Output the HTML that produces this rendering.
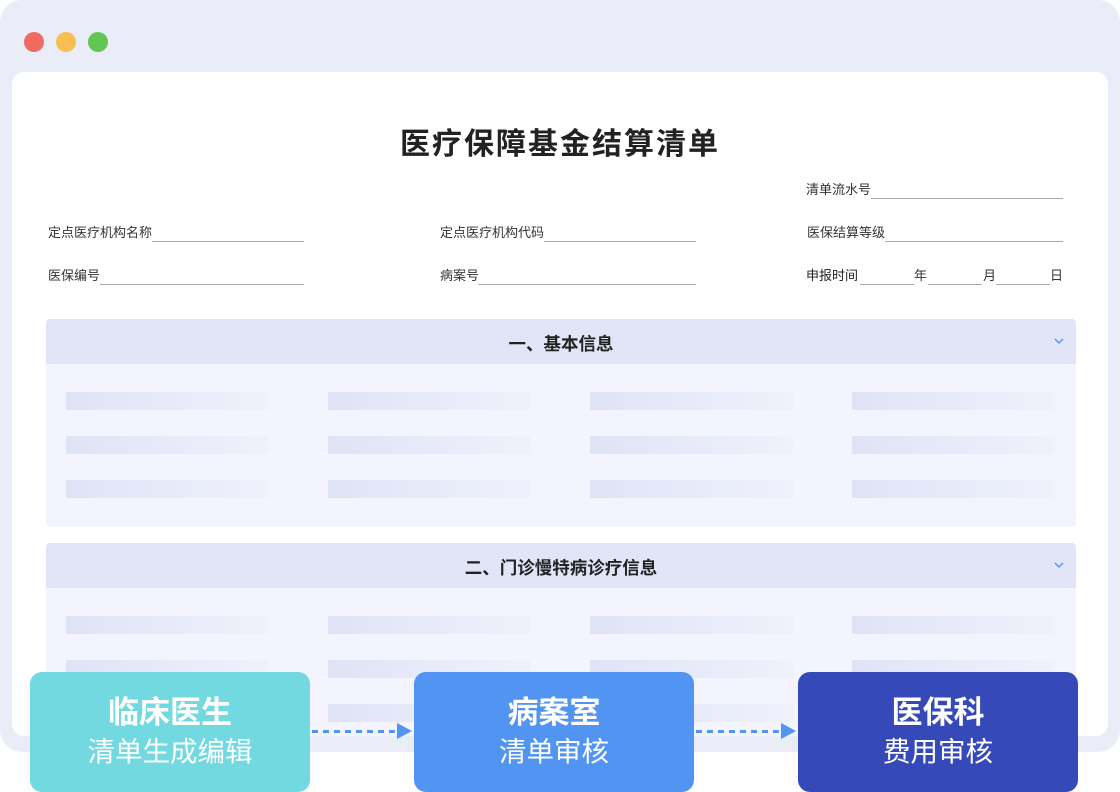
<!DOCTYPE html>
<html><head><meta charset="utf-8"><style>
*{margin:0;padding:0;box-sizing:border-box}
body{width:1120px;height:792px;position:relative;overflow:hidden;background:#fff;font-family:"Liberation Sans","Noto Sans CJK SC",sans-serif;color:#333}
.a{position:absolute}
.frame{left:0;top:0;width:1120px;height:752px;background:#eaedf8;border-radius:22px}
.dot{width:20px;height:20px;border-radius:50%;top:32px}
.panel{left:12px;top:72px;width:1096px;height:664px;background:#fff;border-radius:12px;overflow:hidden}
.lbl{font-size:13px;color:#333;line-height:16px;white-space:nowrap}
.ln{height:1px;background:#aaa}
.sec{left:46px;width:1030px;background:#f3f4fd;border-radius:4px;overflow:hidden}
.sh{height:45px;background:#e1e5f7;text-align:center;font-size:17.5px;font-weight:bold;line-height:50px;color:#222;position:relative}
.chev{position:absolute;right:12px;top:18px;width:10px;height:8px}
.bar{width:203px;height:18px;background:linear-gradient(90deg,#dfe3f6,#eff1fb)}
.btn{top:672px;width:280px;height:120px;border-radius:12px;color:#fff;text-align:center}
.btn .t{font-size:31px;font-weight:bold;margin-top:22px;line-height:38px}
.btn .s{font-size:27.5px;margin-top:3px;line-height:34px}
.dash{top:730px;height:3px;width:86px;background:repeating-linear-gradient(90deg,#5294f2 0 6px,transparent 6px 11px)}
.tri{top:723px;width:0;height:0;border-top:8px solid transparent;border-bottom:8px solid transparent;border-left:15px solid #5294f2}
</style></head><body>
<div class="a frame"></div>
<div class="a dot" style="left:24px;background:#ef6b60"></div>
<div class="a dot" style="left:56px;background:#f7be50"></div>
<div class="a dot" style="left:88px;background:#62c554"></div>
<div class="a panel"></div>
<div class="a" style="left:0;top:125px;width:1120px;text-align:center;font-size:30px;font-weight:bold;color:#222;letter-spacing:2px;line-height:40px">医疗保障基金结算清单</div>

<div class="a lbl" style="left:806px;top:182px">清单流水号</div><div class="a ln" style="left:871px;top:198px;width:192px"></div>
<div class="a lbl" style="left:48px;top:225px">定点医疗机构名称</div><div class="a ln" style="left:152px;top:241px;width:152px"></div>
<div class="a lbl" style="left:440px;top:225px">定点医疗机构代码</div><div class="a ln" style="left:544px;top:241px;width:152px"></div>
<div class="a lbl" style="left:807px;top:225px">医保结算等级</div><div class="a ln" style="left:885px;top:241px;width:178px"></div>
<div class="a lbl" style="left:48px;top:268px">医保编号</div><div class="a ln" style="left:100px;top:284px;width:204px"></div>
<div class="a lbl" style="left:440px;top:268px">病案号</div><div class="a ln" style="left:478px;top:284px;width:218px"></div>
<div class="a lbl" style="left:806px;top:268px;color:#222">申报时间</div><div class="a ln" style="left:860px;top:284px;width:54px"></div>
<div class="a lbl" style="left:914px;top:268px">年</div><div class="a ln" style="left:928px;top:284px;width:54px"></div>
<div class="a lbl" style="left:983px;top:268px">月</div><div class="a ln" style="left:996px;top:284px;width:54px"></div>
<div class="a lbl" style="left:1050px;top:268px">日</div>

<div class="a sec" style="top:319px;height:208px"><div class="sh">一、基本信息<svg class="chev" viewBox="0 0 10 8"><path d="M1 2l4 4 4-4" fill="none" stroke="#4d8ef0" stroke-width="1.3"/></svg></div></div>
<div class="a sec" style="top:543px;height:193px"><div class="sh">二、门诊慢特病诊疗信息<svg class="chev" viewBox="0 0 10 8"><path d="M1 2l4 4 4-4" fill="none" stroke="#4d8ef0" stroke-width="1.3"/></svg></div></div>

<div class="a bar" style="left:66px;top:392px"></div><div class="a bar" style="left:328px;top:392px"></div><div class="a bar" style="left:590px;top:392px"></div><div class="a bar" style="left:852px;top:392px"></div>
<div class="a bar" style="left:66px;top:436px"></div><div class="a bar" style="left:328px;top:436px"></div><div class="a bar" style="left:590px;top:436px"></div><div class="a bar" style="left:852px;top:436px"></div>
<div class="a bar" style="left:66px;top:480px"></div><div class="a bar" style="left:328px;top:480px"></div><div class="a bar" style="left:590px;top:480px"></div><div class="a bar" style="left:852px;top:480px"></div>
<div class="a bar" style="left:66px;top:616px"></div><div class="a bar" style="left:328px;top:616px"></div><div class="a bar" style="left:590px;top:616px"></div><div class="a bar" style="left:852px;top:616px"></div>
<div class="a bar" style="left:66px;top:660px"></div><div class="a bar" style="left:328px;top:660px"></div><div class="a bar" style="left:590px;top:660px"></div><div class="a bar" style="left:852px;top:660px"></div>
<div class="a bar" style="left:66px;top:704px"></div><div class="a bar" style="left:328px;top:704px"></div><div class="a bar" style="left:590px;top:704px"></div><div class="a bar" style="left:852px;top:704px"></div>

<div class="a btn" style="left:30px;background:#72d9e0"><div class="t">临床医生</div><div class="s">清单生成编辑</div></div>
<div class="a dash" style="left:312px"></div><div class="a tri" style="left:397px"></div>
<div class="a btn" style="left:414px;background:#5294f2"><div class="t">病案室</div><div class="s">清单审核</div></div>
<div class="a dash" style="left:696px"></div><div class="a tri" style="left:781px"></div>
<div class="a btn" style="left:798px;background:#3649b9"><div class="t">医保科</div><div class="s">费用审核</div></div>
</body></html>
